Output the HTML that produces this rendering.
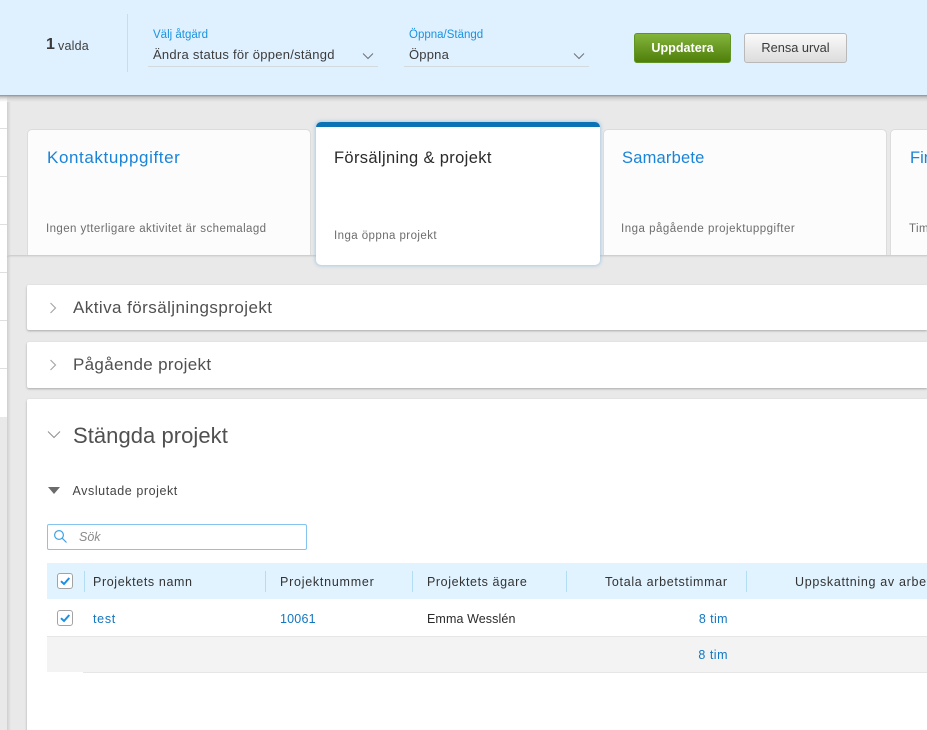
<!DOCTYPE html>
<html lang="sv"><head><meta charset="utf-8"><title>Projekt</title>
<style>
html,body{margin:0;padding:0;width:927px;height:730px;overflow:hidden;background:#e9e9e9;font-family:"Liberation Sans",sans-serif;}
.a{position:absolute;}
.t{position:absolute;white-space:nowrap;line-height:20px;height:20px;}
#root{position:relative;width:927px;height:730px;overflow:hidden;}
.card{position:absolute;top:129px;height:126px;width:284px;background:#fcfcfc;border:1px solid #dcdcdc;border-bottom:none;border-radius:5px 5px 0 0;box-sizing:border-box;}
.panel{position:absolute;left:27px;width:900px;background:#fff;border-radius:2px 0 0 2px;box-shadow:0 1px 2px rgba(0,0,0,.28);}
.sep{position:absolute;top:571px;width:1px;height:21px;background:#b3dcf5;}
.cb{position:absolute;width:16px;height:16px;box-sizing:border-box;border:1px solid #a3a3a3;border-radius:3px;background:#fff;}
</style></head><body><div id="root">

<!-- left sidebar -->
<div class="a" style="left:0;top:95px;width:7px;height:322px;background:#fff"></div>
<div class="a" style="left:7px;top:95px;width:4px;height:635px;background:linear-gradient(90deg,#cfcfcf,#e9e9e9)"></div>
<div class="a" style="left:0;top:128px;width:7px;height:1px;background:#dfdfdf"></div>
<div class="a" style="left:0;top:176px;width:7px;height:1px;background:#dfdfdf"></div>
<div class="a" style="left:0;top:224px;width:7px;height:1px;background:#dfdfdf"></div>
<div class="a" style="left:0;top:272px;width:7px;height:1px;background:#dfdfdf"></div>
<div class="a" style="left:0;top:320px;width:7px;height:1px;background:#dfdfdf"></div>
<div class="a" style="left:0;top:368px;width:7px;height:1px;background:#dfdfdf"></div>

<!-- tab strip line -->
<div class="a" style="left:7px;top:255px;width:920px;height:1px;background:#cfcfcf;box-shadow:0 1px 1px rgba(0,0,0,.08)"></div>

<!-- tabs -->
<div class="card" style="left:27px"></div>
<div class="t" style="left:47px;top:148px;font-size:17px;color:#1a84d8;letter-spacing:.6px">Kontaktuppgifter</div>
<div class="t" style="left:46px;top:219px;font-size:11.5px;color:#6d6d6d;letter-spacing:.42px">Ingen ytterligare aktivitet är schemalagd</div>

<div class="a" style="left:316px;top:122px;width:284px;height:143px;background:#fff;border-radius:5px;box-shadow:0 0 3px 1px rgba(125,180,220,.55);overflow:hidden"><div style="height:5px;background:#0a72b5"></div></div>
<div class="t" style="left:334px;top:148px;font-size:16.5px;color:#2b2b2b;letter-spacing:.35px">Försäljning &amp; projekt</div>
<div class="t" style="left:334px;top:226px;font-size:11.5px;color:#6d6d6d;letter-spacing:.43px">Inga öppna projekt</div>

<div class="card" style="left:603px"></div>
<div class="t" style="left:622px;top:148px;font-size:16.5px;color:#1a84d8;letter-spacing:.2px">Samarbete</div>
<div class="t" style="left:621px;top:219px;font-size:11.5px;color:#6d6d6d;letter-spacing:.5px">Inga pågående projektuppgifter</div>

<div class="card" style="left:890px;width:60px"></div>
<div class="t" style="left:910px;top:148px;font-size:16.5px;color:#1a84d8">Fin</div>
<div class="t" style="left:909px;top:219px;font-size:11.5px;color:#6d6d6d;letter-spacing:.4px">Tim</div>

<!-- header -->
<div class="a" style="left:0;top:0;width:927px;height:95px;background:#dff0ff"></div>
<div class="a" style="left:0;top:95px;width:927px;height:7px;background:linear-gradient(#8f8f8f 0,#c4c4c4 2px,#d8d8d8 4px,#e9e9e9 7px);"></div>
<div class="a" style="left:0;top:95px;width:7px;height:7px;background:linear-gradient(#8f8f8f 0,#c9c9c9 2px,#e6e6e6 4px,#fff 7px);"></div>
<div class="t" style="left:46px;top:35px;font-size:16px;font-weight:bold;color:#3a3a3a">1</div>
<div class="t" style="left:58px;top:36px;font-size:12.5px;color:#3f3f3f;letter-spacing:.2px">valda</div>
<div class="a" style="left:127px;top:14px;width:1px;height:58px;background:#cfdbe4"></div>

<div class="t" style="left:153px;top:25px;font-size:11.5px;color:#1a93e0">Välj åtgärd</div>
<div class="t" style="left:153px;top:45px;font-size:13px;color:#3c3c3c;letter-spacing:.26px">Ändra status för öppen/stängd</div>
<div class="a" style="left:148px;top:66px;width:230px;height:1px;background:#d3dade"></div>
<svg class="a" style="left:362px;top:52px" width="12" height="8" viewBox="0 0 12 8"><path d="M1 1.5 L6 6.5 L11 1.5" fill="none" stroke="#6e7275" stroke-width="1"/></svg>

<div class="t" style="left:409px;top:25px;font-size:11.5px;color:#1a93e0">Öppna/Stängd</div>
<div class="t" style="left:409px;top:45px;font-size:13px;color:#3c3c3c;letter-spacing:.2px">Öppna</div>
<div class="a" style="left:404px;top:66px;width:185px;height:1px;background:#d3dade"></div>
<svg class="a" style="left:573px;top:52px" width="12" height="8" viewBox="0 0 12 8"><path d="M1 1.5 L6 6.5 L11 1.5" fill="none" stroke="#6e7275" stroke-width="1"/></svg>

<div class="a" style="left:634px;top:33px;width:97px;height:30px;box-sizing:border-box;background:linear-gradient(#83b43c,#4f7f0a);border:1px solid #5f9422;border-radius:3px"></div>
<div class="t" style="left:634px;top:38px;width:97px;text-align:center;font-size:12.6px;font-weight:bold;color:#fff">Uppdatera</div>
<div class="a" style="left:744px;top:33px;width:103px;height:30px;box-sizing:border-box;background:linear-gradient(#fafafa,#dcdcdc);border:1px solid #b9b9b9;border-radius:3px"></div>
<div class="t" style="left:744px;top:38px;width:103px;text-align:center;font-size:12.8px;color:#3a3a3a">Rensa urval</div>

<!-- panels -->
<div class="panel" style="top:285px;height:45px"></div>
<svg class="a" style="left:49px;top:302px" width="8" height="12" viewBox="0 0 8 12"><path d="M1.5 1 L6.5 6 L1.5 11" fill="none" stroke="#a8a8a8" stroke-width="1.2"/></svg>
<div class="t" style="left:73px;top:298px;font-size:17px;color:#505050;letter-spacing:.44px">Aktiva försäljningsprojekt</div>

<div class="panel" style="top:342px;height:46px"></div>
<svg class="a" style="left:49px;top:359px" width="8" height="12" viewBox="0 0 8 12"><path d="M1.5 1 L6.5 6 L1.5 11" fill="none" stroke="#a8a8a8" stroke-width="1.2"/></svg>
<div class="t" style="left:73px;top:355px;font-size:17px;color:#505050;letter-spacing:.32px">Pågående projekt</div>

<div class="panel" style="top:399px;height:340px"></div>
<svg class="a" style="left:47px;top:430px" width="14" height="9" viewBox="0 0 14 9"><path d="M1 1.5 L7 7.5 L13 1.5" fill="none" stroke="#8f8f8f" stroke-width="1"/></svg>
<div class="t" style="left:73px;top:426px;font-size:22px;color:#505050;letter-spacing:.05px">Stängda projekt</div>

<svg class="a" style="left:48px;top:487px" width="12" height="7" viewBox="0 0 12 7"><path d="M0 0 H12 L6 7 Z" fill="#6b6b6b"/></svg>
<div class="t" style="left:72.5px;top:481px;font-size:12.5px;color:#444;letter-spacing:.57px">Avslutade projekt</div>

<!-- search -->
<div class="a" style="left:47px;top:524px;width:260px;height:26px;box-sizing:border-box;background:#fff;border:1px solid #84c4ee;border-radius:2px"></div>
<svg class="a" style="left:53px;top:529px" width="15" height="15" viewBox="0 0 15 15"><circle cx="6" cy="6" r="4.4" fill="none" stroke="#3fa3e6" stroke-width="1.2"/><path d="M9.3 9.3 L13.5 13.5" stroke="#3fa3e6" stroke-width="1.2"/></svg>
<div class="t" style="left:79px;top:527px;font-size:12.5px;font-style:italic;color:#8b8b8b">Sök</div>

<!-- table -->
<div class="a" style="left:47px;top:563px;width:880px;height:36px;background:#e1f3ff"></div>
<div class="a" style="left:47px;top:636px;width:880px;height:1px;background:#e6e6e6"></div>
<div class="a" style="left:47px;top:637px;width:880px;height:35px;background:#f3f3f3"></div>
<div class="a" style="left:83px;top:672px;width:844px;height:1px;background:#e6e6e6"></div>

<div class="sep" style="left:84px"></div>
<div class="sep" style="left:265px"></div>
<div class="sep" style="left:412px"></div>
<div class="sep" style="left:566px"></div>
<div class="sep" style="left:746px"></div>

<div class="cb" style="left:57px;top:573px"></div>
<svg class="a" style="left:57px;top:573px" width="16" height="16" viewBox="0 0 16 16"><path d="M4 8.2 L7 11 L12.3 5" fill="none" stroke="#1a8fe3" stroke-width="2"/></svg>
<div class="cb" style="left:57px;top:610px"></div>
<svg class="a" style="left:57px;top:610px" width="16" height="16" viewBox="0 0 16 16"><path d="M4 8.2 L7 11 L12.3 5" fill="none" stroke="#1a8fe3" stroke-width="2"/></svg>

<div class="t" style="left:93px;top:572px;font-size:12.5px;color:#333;letter-spacing:.62px">Projektets namn</div>
<div class="t" style="left:280px;top:572px;font-size:12.5px;color:#333;letter-spacing:.75px">Projektnummer</div>
<div class="t" style="left:427px;top:572px;font-size:12.5px;color:#333;letter-spacing:.59px">Projektets ägare</div>
<div class="t" style="left:605px;top:572px;font-size:12.5px;color:#333;letter-spacing:.68px">Totala arbetstimmar</div>
<div class="t" style="left:795px;top:572px;font-size:12.5px;color:#333;letter-spacing:.68px">Uppskattning av arbete</div>

<div class="t" style="left:93px;top:609px;font-size:12.5px;color:#1277c0;letter-spacing:.7px">test</div>
<div class="t" style="left:280px;top:609px;font-size:12.5px;color:#1277c0;letter-spacing:.2px">10061</div>
<div class="t" style="left:427px;top:609px;font-size:12.5px;color:#2b2b2b;letter-spacing:.1px">Emma Wesslén</div>
<div class="t" style="left:628px;width:100px;text-align:right;top:609px;font-size:12.5px;color:#1277c0;letter-spacing:.4px">8 tim</div>
<div class="t" style="left:628px;width:100px;text-align:right;top:645px;font-size:12.5px;color:#1277c0;letter-spacing:.5px">8 tim</div>

</div></body></html>
